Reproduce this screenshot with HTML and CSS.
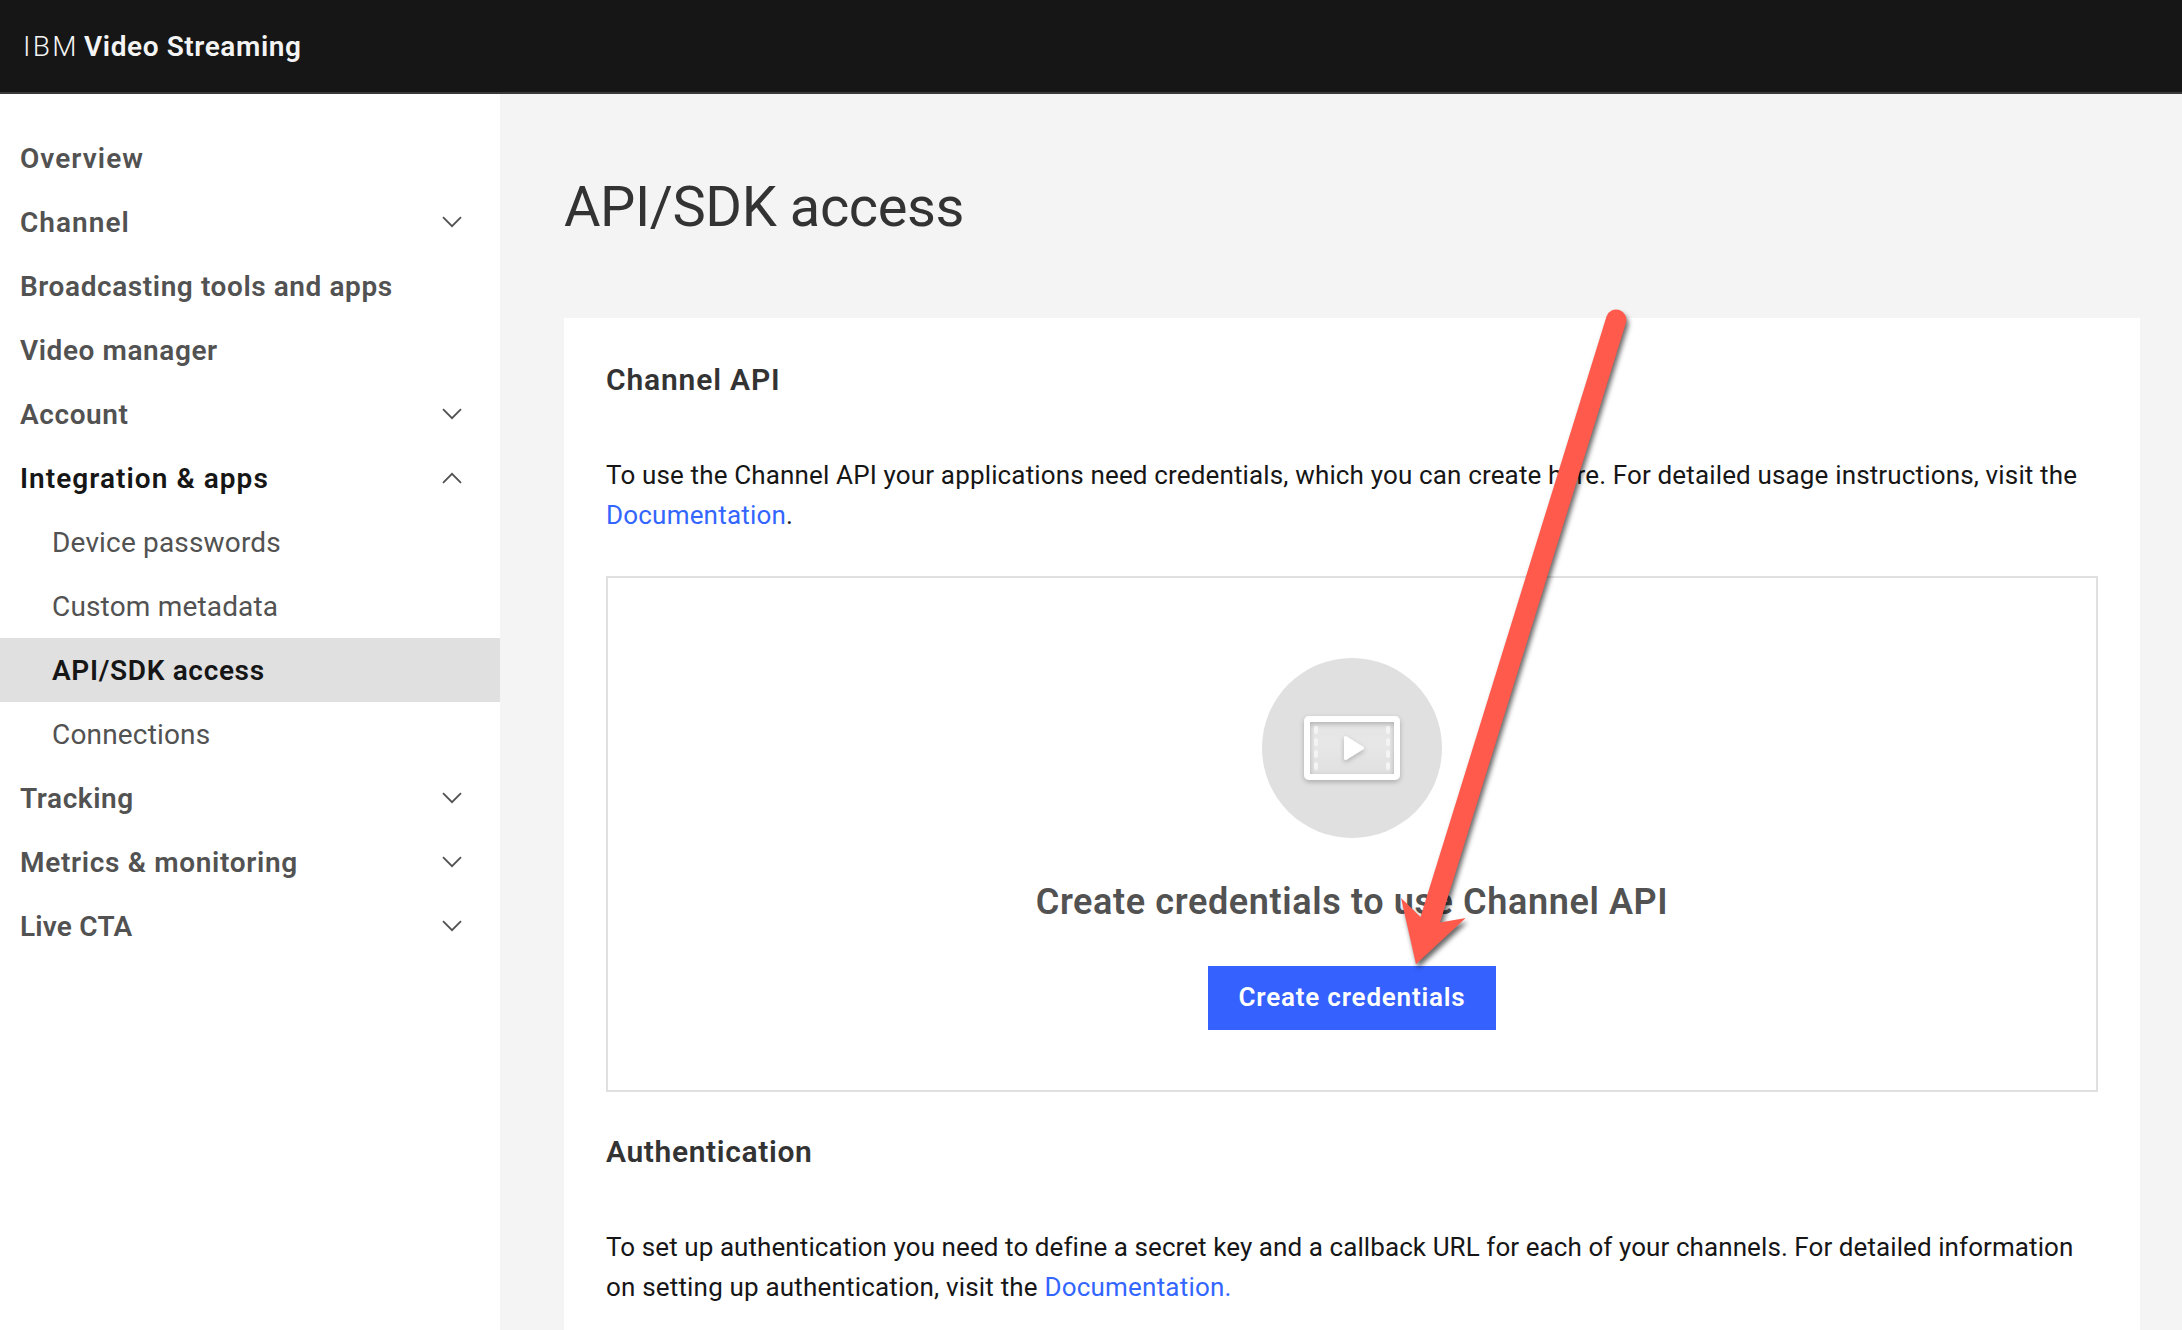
FILE: index.html
```html
<!DOCTYPE html>
<html lang="en">
<head>
<meta charset="utf-8">
<title>API/SDK access</title>
<link rel="stylesheet" href="styles.css">
</head>
<body>
<svg class="sprite" aria-hidden="true">
  <symbol id="chevron" viewBox="0 0 20 12"><path d="M1 1.2 10 10.2 19 1.2" fill="none" stroke="currentColor" stroke-width="1.8"/></symbol>
</svg>
<header class="topbar">
  <span class="brand-light">IBM</span>
  <span class="brand-name">Video Streaming</span>
</header>
<div class="layout">
  <nav class="sidebar">
    <a class="item track-xl">Overview</a>
    <a class="item track-xl">Channel<svg class="chevron"><use href="#chevron"/></svg></a>
    <a class="item">Broadcasting tools and apps</a>
    <a class="item">Video manager</a>
    <a class="item">Account<svg class="chevron"><use href="#chevron"/></svg></a>
    <a class="item open track-xl">Integration &amp; apps<svg class="chevron up"><use href="#chevron"/></svg></a>
    <a class="item sub">Device passwords</a>
    <a class="item sub">Custom metadata</a>
    <a class="item sub current">API/SDK access</a>
    <a class="item sub">Connections</a>
    <a class="item">Tracking<svg class="chevron"><use href="#chevron"/></svg></a>
    <a class="item track-m">Metrics &amp; monitoring<svg class="chevron"><use href="#chevron"/></svg></a>
    <a class="item track-s">Live CTA<svg class="chevron"><use href="#chevron"/></svg></a>
  </nav>
  <main class="content">
    <h1 class="title">API/SDK access</h1>
    <section class="card">
      <h2 class="heading heading-wide">Channel API</h2>
      <p class="text">To use the Channel API your applications need credentials, which you can create here. For detailed usage instructions, visit the <a class="link">Documentation</a>.</p>
      <div class="empty">
        <svg class="art" viewBox="0 0 180 180">
          <defs>
            <linearGradient id="screen" x1="0" y1="0" x2="0" y2="1"><stop offset="0" stop-color="#e5e5e5"/><stop offset=".45" stop-color="#e7e7e7"/><stop offset="1" stop-color="#e0e0e0"/></linearGradient>
            <filter id="soft" x="-30%" y="-30%" width="160%" height="170%"><feDropShadow dx="0" dy="2" stdDeviation="2.4" flood-color="#000" flood-opacity=".24"/></filter>
          </defs>
          <circle cx="90" cy="90" r="90" fill="#e0e0e0"/>
          <rect x="48" y="64" width="84" height="52" fill="url(#screen)"/>
          <path filter="url(#soft)" fill="#fff" fill-rule="evenodd" d="M47 58h86a5 5 0 0 1 5 5v54a5 5 0 0 1-5 5H47a5 5 0 0 1-5-5V63a5 5 0 0 1 5-5zM48 64v52h84V64z"/>
          <path d="M54 70v4M54 82v4M54 94v4M54 106v4M126 70v4M126 82v4M126 94v4M126 106v4" stroke="#f4f4f4" stroke-width="4" stroke-linecap="round"/>
          <path filter="url(#soft)" d="M83.500 79.500 100.500 90 83.500 100.500z" fill="#fff" stroke="#fff" stroke-width="3" stroke-linejoin="round"/>
        </svg>
        <h3 class="empty-title">Create credentials to use Channel API</h3>
        <button class="button">Create credentials</button>
      </div>
      <h2 class="heading">Authentication</h2>
      <p class="text text-auth">To set up authentication you need to define a secret key and a callback URL for each of your channels. For detailed information <span class="closing">on setting up authentication, visit the <a class="link">Documentation.</a></span></p>
    </section>
  </main>
</div>
<svg class="arrow" viewBox="1380 290 270 710">
  <path d="M1606.500 316.500A10.100 10.100 0 0 1 1625.900 323L1440 922.500 1465.700 918 1416 964.300 1401 898 1420.500 917z" fill="#ff5a4c"/>
</svg>
</body>
</html>
```
FILE: styles.css
```css
* { box-sizing: border-box; }
html { overflow: hidden; }
body {
  margin: 0;
  height: 1330px;
  overflow: hidden;
  position: relative;
  display: flex;
  flex-direction: column;
  background: #f4f4f4;
  color: #161616;
  font-family: Roboto, "Liberation Sans", sans-serif;
}
.sprite { display: none; }

.topbar {
  flex: none;
  display: flex;
  align-items: center;
  height: 94px;
  padding-left: 23px;
  background: #161616;
  border-bottom: 2px solid #393939;
  color: #f4f4f4;
  font-size: 28px;
}
.brand-light { width: 61px; font-weight: 300; letter-spacing: 2.3px; }
.brand-name { font-weight: 600; letter-spacing: .59px; }

.layout { flex: 1; min-height: 0; display: flex; }
.sidebar { width: 500px; padding-top: 32px; background: #fff; }
.item {
  display: flex;
  align-items: center;
  justify-content: space-between;
  height: 64px;
  padding: 0 38px 0 20px;
  color: #525252;
  font-size: 28px;
  font-weight: 600;
  letter-spacing: .58px;
}
.track-xl { letter-spacing: 1.05px; }
.track-m { letter-spacing: .68px; }
.track-s { letter-spacing: .2px; }
.open { color: #161616; }
.sub { padding-left: 52px; font-weight: 400; letter-spacing: .17px; }
.current { background: #e0e0e0; color: #161616; font-weight: 600; letter-spacing: .66px; }
.chevron { width: 20px; height: 12px; color: #525252; }
.up { transform: rotate(180deg); }

.content { flex: 1; display: flex; flex-direction: column; padding: 81px 42px 0 64px; }
.title { margin: 0 0 79px; font-size: 56px; line-height: 64px; font-weight: 400; letter-spacing: -.42px; color: #333; }
.card { flex: 1; padding: 42px 42px 0; background: #fff; }
.heading { margin: 0 0 55px; font-size: 30px; line-height: 40px; font-weight: 600; letter-spacing: .63px; color: #333; }
.heading-wide { letter-spacing: .84px; }
.text { margin: 0; font-size: 26px; line-height: 40px; letter-spacing: .15px; }
.text-auth { letter-spacing: .08px; }
.closing { display: block; letter-spacing: .18px; }
.link { color: #3366ff; letter-spacing: .2px; }

.empty {
  display: flex;
  flex-direction: column;
  align-items: center;
  height: 516px;
  margin: 41px 0 40px;
  padding-top: 80px;
  border: 2px solid #e0e0e0;
}
.art { width: 180px; height: 180px; }
.empty-title { margin: 40px 0; font-size: 36px; line-height: 48px; font-weight: 600; letter-spacing: .62px; color: #525252; }
.button {
  width: 288px;
  height: 64px;
  padding: 0 0 2px;
  border: 0;
  background: #3562ff;
  color: #fff;
  font: 600 26px Roboto, sans-serif;
  letter-spacing: .8px;
}

/* Annotation laid over the page, pointing at the button */
.arrow {
  position: absolute;
  left: 1380px;
  top: 290px;
  width: 270px;
  height: 710px;
  filter: drop-shadow(2px 4px 2.5px rgba(0, 0, 0, .6));
}
```
